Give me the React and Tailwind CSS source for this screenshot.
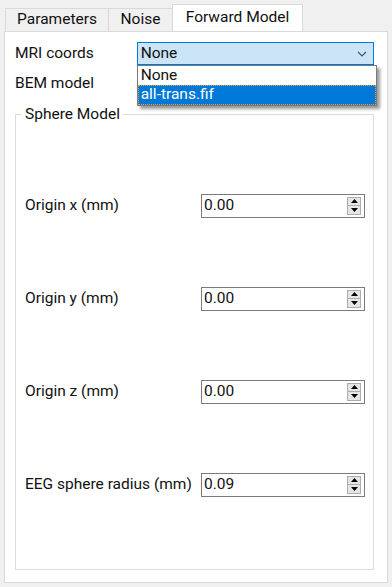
import React from "react";

const font = { fontFamily: "Roboto, 'Noto Sans', sans-serif" };

// Tab header
const Tab = ({ label, active, width }) => (
  <div
    className={
      active
        ? "h-[27px] -mb-px z-10 border border-b-0 border-[#d9d9d9] bg-white flex items-center justify-center text-[15.5px] text-[#111]"
        : "mt-[4px] h-[23px] border border-b-0 border-r-0 border-[#d9d9d9] bg-[#f0f0f0] flex items-center justify-center text-[15.5px] text-[#111]"
    }
    style={{ width }}
  >
    {label}
  </div>
);

// Qt-like spin box
const SpinBox = ({ value }) => (
  <div className="w-[164px] h-[24px] border border-[#7a7a7a] bg-white flex items-center">
    <span className="flex-1 pl-[2px] text-[15.5px] text-[#111] leading-none">{value}</span>
    <div className="flex flex-col mr-[3px] h-[18px] w-[14px] border border-[#adadad] bg-[#e5e5e5]">
      <div className="flex-1 flex items-center justify-center border-b border-[#adadad]">
        <svg width="7" height="4" viewBox="0 0 7 4">
          <path d="M0 4 L3.5 0 L7 4 Z" fill="#000" />
        </svg>
      </div>
      <div className="flex-1 flex items-center justify-center">
        <svg width="7" height="4" viewBox="0 0 7 4">
          <path d="M0 0 L3.5 4 L7 0 Z" fill="#000" />
        </svg>
      </div>
    </div>
  </div>
);

const FieldRow = ({ label, value }) => (
  <div className="h-[93px] flex items-center pl-[9px] pr-[8px]">
    <span className="w-[176px] text-[15.5px] text-[#111]">{label}</span>
    <SpinBox value={value} />
  </div>
);

export default function App() {
  return (
    <div className="w-[392px] h-[587px] bg-[#f0f0f0] overflow-hidden" style={font}>
      {/* tab bar */}
      <div className="flex items-start pl-[5px] pt-[4px]">
        <Tab label="Parameters" width={103} />
        <Tab label="Noise" width={64} />
        <Tab label="Forward Model" width={131} active />
      </div>

      {/* pane */}
      <div className="relative mx-[4px] h-[552px] border border-[#d9d9d9] bg-white pl-[10px] pr-[13px]">
        <div className="flex items-center h-[23px] mt-[10px]">
          <span className="w-[122px] text-[15.5px] text-[#111]">MRI coords</span>
          <div className="relative w-[238px] h-[23px] border border-[#0078d7] bg-[#cce4f7] flex items-center pl-[3px] pr-[6px]">
            <span className="flex-1 text-[15.5px] text-[#111]">None</span>
            <svg width="10" height="6" viewBox="0 0 10 6">
              <path d="M1 1 L5 5 L9 1" fill="none" stroke="#555" strokeWidth="1.2" />
            </svg>
            {/* open dropdown */}
            <div className="absolute left-[-1px] top-[22px] w-[240px] border border-[#7a7a7a] bg-white shadow-[3px_3px_3px_rgba(0,0,0,0.4)] z-20">
              <div className="h-[19px] flex items-center pl-[3px] text-[15.5px] text-[#111]">None</div>
              <div className="h-[20px] flex items-center pl-[2px] text-[15.5px] text-white bg-[#0078d7] border border-dotted border-[#e8a33c]">
                all-trans.fif
              </div>
            </div>
          </div>
        </div>

        <div className="h-[23px] mt-[7px] flex items-center">
          <span className="text-[15.5px] text-[#111]">BEM model</span>
        </div>

        {/* Sphere Model group */}
        <div className="relative mt-[19px] h-[456px] border border-[#dcdcdc]">
          <span className="absolute -top-[11px] left-[6px] bg-white px-[3px] text-[15.5px] text-[#111] leading-[20px]">
            Sphere Model
          </span>
          <div className="pt-[44px]">
            <FieldRow label="Origin x (mm)" value="0.00" />
            <FieldRow label="Origin y (mm)" value="0.00" />
            <FieldRow label="Origin z (mm)" value="0.00" />
            <FieldRow label="EEG sphere radius (mm)" value="0.09" />
          </div>
        </div>
      </div>
    </div>
  );
}
